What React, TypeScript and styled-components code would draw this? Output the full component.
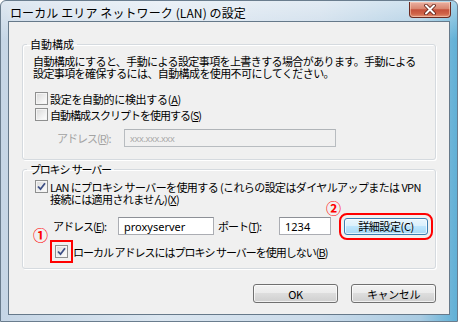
import React from 'react'
import styled, { createGlobalStyle } from 'styled-components'

const GlobalStyle = createGlobalStyle`
  html, body {
    margin: 0;
    padding: 0;
    background: #ffffff;
  }
  body {
    font-family: "Noto Sans CJK JP", "Noto Sans", sans-serif;
    font-size: 11px;
    color: #000;
  }
`

const Window = styled.div`
  width: 458px;
  height: 322px;
  box-sizing: border-box;
  display: flex;
  flex-direction: column;
  padding: 0 7px 8px 7px;
  border: 1px solid #6a7d8e;
  border-radius: 6px 6px 0 0;
  background:
    linear-gradient(180deg, rgba(255, 255, 255, 0.45) 0%, rgba(255, 255, 255, 0) 12%),
    linear-gradient(90deg, #c6d6e6 0%, #dbe6f0 35%, #cbdbea 70%, #a9cbe2 92%, #5fb0d6 100%);
`

const TitleBar = styled.div`
  height: 28px;
  display: flex;
  justify-content: space-between;
  align-items: flex-start;
  padding-left: 2px;
`

const Title = styled.span`
  margin-top: 4px;
  font-size: 12px;
  line-height: 16px;
  letter-spacing: 0.1px;
  text-shadow: 0 0 6px rgba(255, 255, 255, 0.9);
`

const CloseButton = styled.div`
  width: 42px;
  height: 16px;
  margin-top: 1px;
  margin-right: -1px;
  box-sizing: border-box;
  border: 1px solid #6b2a20;
  border-top: none;
  border-radius: 0 0 4px 4px;
  display: flex;
  align-items: center;
  justify-content: center;
  background: linear-gradient(180deg, #eab0a2 0%, #d98670 45%, #c6503a 52%, #d06448 80%, #e39478 100%);
  box-shadow: inset 0 0 0 1px rgba(255, 220, 200, 0.5);
`

const Client = styled.div`
  flex: 1;
  display: flex;
  flex-direction: column;
  box-sizing: border-box;
  padding: 0 13px 11px 13px;
  border: 1px solid #66798a;
  background: #f0f0f0;
`

const Group = styled.fieldset<{ $top: number }>`
  margin: ${p => p.$top}px 0 0 0;
  padding: 0;
  min-width: 0;
  border: 1px solid #d5dadf;
  border-radius: 3px;
  box-shadow: inset 1px 1px 0 #ffffff, 1px 1px 0 #ffffff;
`

const Legend = styled.legend<{ $ls?: number }>`
  margin-left: 4px;
  padding: 0 3px;
  font-size: 11px;
  line-height: 14px;
  white-space: pre;
  letter-spacing: ${p => p.$ls ?? 0}px;
`

const GroupBody = styled.div<{ $pt: number; $pb: number }>`
  display: flex;
  flex-direction: column;
  padding: ${p => p.$pt}px 10px ${p => p.$pb}px 10px;
`

const Description = styled.div`
  line-height: 12px;
  letter-spacing: -0.6px;
  white-space: nowrap;
`

const CheckRow = styled.div<{ $mt: number; $ml?: number; $gap?: number }>`
  display: flex;
  align-items: flex-start;
  gap: ${p => p.$gap ?? 2}px;
  margin-top: ${p => p.$mt}px;
  margin-left: ${p => p.$ml ?? 2}px;
`

const CheckLabel = styled.span<{ $ls?: number }>`
  display: flex;
  flex-direction: column;
  line-height: 12px;
  margin-top: 1px;
  white-space: nowrap;
  letter-spacing: ${p => p.$ls ?? -0.3}px;
`

const Line = styled.span`
  display: block;
  height: 12px;
`

const Box = styled.span<{ $marked?: boolean }>`
  width: 13px;
  height: 13px;
  flex: none;
  box-sizing: border-box;
  border: 1px solid #8e8f8f;
  background: linear-gradient(135deg, #d8d8d8 0%, #f4f4f4 70%, #ffffff 100%);
  box-shadow: inset 0 0 0 1px #f4f4f4;
  display: flex;
  align-items: center;
  justify-content: center;
  outline: ${p => (p.$marked ? '2px solid #ff0000' : 'none')};
  outline-offset: 3px;
`

const FieldRow = styled.div<{ $mt: number }>`
  display: flex;
  align-items: center;
  margin-top: ${p => p.$mt}px;
`

const FieldLabel = styled.span<{ $w: number; $pl?: number; $ls?: number; $disabled?: boolean }>`
  width: ${p => p.$w}px;
  padding-left: ${p => p.$pl ?? 0}px;
  box-sizing: border-box;
  flex: none;
  line-height: 12px;
  white-space: nowrap;
  letter-spacing: ${p => p.$ls ?? -0.5}px;
  color: ${p => (p.$disabled ? '#a3a3a3' : '#000')};
`

const TextBox = styled.div<{ $w: number; $disabled?: boolean }>`
  width: ${p => p.$w}px;
  height: 18px;
  flex: none;
  box-sizing: border-box;
  display: flex;
  align-items: center;
  padding-left: 5px;
  border: 1px solid ${p => (p.$disabled ? '#b8bcc0' : '#abadb3')};
  border-top-color: ${p => (p.$disabled ? '#b0b4b8' : '#8d9097')};
  background: ${p => (p.$disabled ? '#f0f0f0' : '#ffffff')};
  color: ${p => (p.$disabled ? '#a8a8a8' : '#000')};
  font-family: "Noto Sans", "Noto Sans CJK JP", sans-serif;
  font-size: ${p => (p.$disabled ? 9 : 11)}px;
  letter-spacing: ${p => (p.$disabled ? -0.3 : 0)}px;
`

const Marked = styled.div<{ $ml?: number }>`
  position: relative;
  display: flex;
  margin-left: ${p => p.$ml ?? 0}px;
`

const Marker = styled.span<{ $left: number; $top: number }>`
  position: absolute;
  left: ${p => p.$left}px;
  top: ${p => p.$top}px;
  color: #ff0000;
  font-size: 15px;
  line-height: 15px;
  font-weight: bold;
`

const PushButton = styled.div<{ $w: number; $h: number; $hot?: boolean; $marked?: boolean }>`
  width: ${p => p.$w}px;
  height: ${p => p.$h}px;
  box-sizing: border-box;
  display: flex;
  align-items: center;
  justify-content: center;
  border: 1px solid ${p => (p.$hot ? '#3c7fb1' : '#707070')};
  border-radius: 3px;
  background: ${p =>
    p.$hot
      ? 'linear-gradient(180deg, #eaf6fd 0%, #d9f0fc 49%, #bee6fd 50%, #a7d9f5 100%)'
      : 'linear-gradient(180deg, #f2f2f2 0%, #ebebeb 49%, #dddddd 50%, #cfcfcf 100%)'};
  box-shadow: inset 0 0 0 1px rgba(255, 255, 255, 0.7);
  line-height: 12px;
  white-space: nowrap;
  letter-spacing: -0.4px;
  outline: ${p => (p.$marked ? '2px solid #ff0000' : 'none')};
  outline-offset: 3px;
`

const ButtonRow = styled.div`
  display: flex;
  justify-content: flex-end;
  gap: 13px;
  margin-top: 15px;
`

const Key = styled.span`
  display: inline-block;
  line-height: 12px;
  text-decoration: underline;
  text-underline-offset: 1px;
`

const Check = () => (
  <svg width="9" height="9" viewBox="0 0 9 9">
    <path d="M1 4.5 L3.5 7.2 L8 1.2" fill="none" stroke="#3d4f85" strokeWidth="1.8" />
  </svg>
)

const CloseGlyph = () => (
  <svg width="14" height="11" viewBox="0 0 14 11">
    <path d="M3 1.5 L11 9.5 M11 1.5 L3 9.5" stroke="#5a1a10" strokeWidth="3.6" strokeLinecap="round" />
    <path d="M3 1.5 L11 9.5 M11 1.5 L3 9.5" stroke="#ffffff" strokeWidth="2" strokeLinecap="round" />
  </svg>
)

export default function App() {
  return (
    <>
      <GlobalStyle />
      <Window>
        <TitleBar>
          <Title>ローカル エリア ネットワーク (LAN) の設定</Title>
          <CloseButton>
            <CloseGlyph />
          </CloseButton>
        </TitleBar>
        <Client>
          <Group $top={15}>
            <Legend>自動構成</Legend>
            <GroupBody $pt={4} $pb={12}>
              <Description>
                自動構成にすると、手動による設定事項を上書きする場合があります。手動による
                <br />
                設定事項を確保するには、自動構成を使用不可にしてください。
              </Description>
              <CheckRow $mt={13}>
                <Box />
                <CheckLabel>
                  <Line>
                    設定を自動的に検出する(<Key>A</Key>)
                  </Line>
                </CheckLabel>
              </CheckRow>
              <CheckRow $mt={3}>
                <Box />
                <CheckLabel $ls={-1}>
                  <Line>
                    自動構成スクリプトを使用する(<Key>S</Key>)
                  </Line>
                </CheckLabel>
              </CheckRow>
              <FieldRow $mt={8}>
                <FieldLabel $w={91} $pl={24} $ls={-1} $disabled>
                  アドレス(<Key>R</Key>):
                </FieldLabel>
                <TextBox $w={212} $disabled>
                  xxx.xxx.xxx
                </TextBox>
              </FieldRow>
            </GroupBody>
          </Group>
          <Group $top={2}>
            <Legend $ls={-1.2}>プロキシ  サーバー</Legend>
            <GroupBody $pt={4} $pb={10}>
              <CheckRow $mt={0}>
                <Box>
                  <Check />
                </Box>
                <CheckLabel $ls={-0.6}>
                  <Line>LAN にプロキシ サーバーを使用する (これらの設定はダイヤルアップまたは VPN</Line>
                  <Line>
                    接続には適用されません)(<Key>X</Key>)
                  </Line>
                </CheckLabel>
              </CheckRow>
              <FieldRow $mt={12}>
                <FieldLabel $w={85} $pl={20} $ls={-1}>
                  アドレス(<Key>E</Key>):
                </FieldLabel>
                <TextBox $w={96}>proxyserver</TextBox>
                <FieldLabel $w={65} $pl={4} $ls={-1}>
                  ポート(<Key>T</Key>):
                </FieldLabel>
                <TextBox $w={52}>1234</TextBox>
                <Marked $ml={13}>
                  <Marker $left={-18} $top={-18}>②</Marker>
                  <PushButton $w={84} $h={17} $hot $marked>
                    詳細設定(C)
                  </PushButton>
                </Marked>
              </FieldRow>
              <CheckRow $mt={10} $ml={22} $gap={5}>
                <Marked>
                  <Marker $left={-22} $top={-18}>①</Marker>
                  <Box $marked>
                    <Check />
                  </Box>
                </Marked>
                <CheckLabel $ls={-1}>
                  <Line>
                    ローカル アドレスにはプロキシ サーバーを使用しない(<Key>B</Key>)
                  </Line>
                </CheckLabel>
              </CheckRow>
            </GroupBody>
          </Group>
          <ButtonRow>
            <PushButton $w={85} $h={19}>OK</PushButton>
            <PushButton $w={85} $h={19}>キャンセル</PushButton>
          </ButtonRow>
        </Client>
      </Window>
    </>
  )
}
